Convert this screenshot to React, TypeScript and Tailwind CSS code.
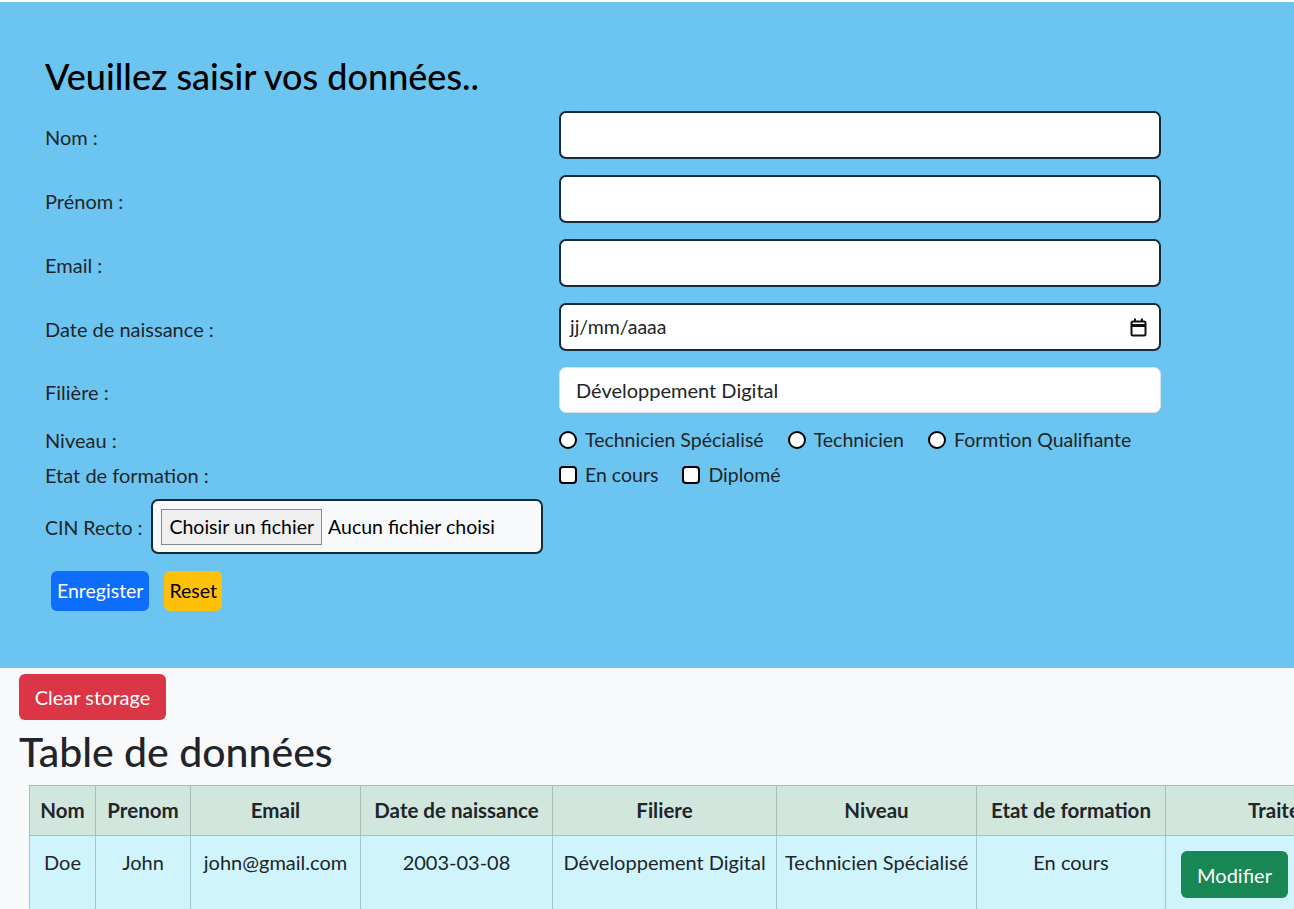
import React from "react"

const labelCls = "text-[20px] text-[#212529]"
const inputCls = "h-[48px] w-[602px] rounded-[7px] border-2 border-[#162b3a] bg-white"

function Row({ label, children, h = "h-[48px]", mt = "mt-4", pt = "pt-[4px]" }: { label: string; children: React.ReactNode; h?: string; mt?: string; pt?: string }) {
  return (
    <div className={`flex items-center ${h} ${mt}`}>
      <div className={`w-[514px] ${pt} ${labelCls}`}>{label}</div>
      {children}
    </div>
  )
}

function Radio({ label }: { label: string }) {
  return (
    <label className="flex items-center gap-[8px] text-[19.5px] text-[#212529]">
      <span className="h-[18px] w-[18px] rounded-full border-2 border-black bg-white" />
      {label}
    </label>
  )
}

function Check({ label }: { label: string }) {
  return (
    <label className="flex items-center gap-[8px] text-[19.5px] text-[#212529]">
      <span className="h-[18px] w-[18px] rounded-[4px] border-2 border-black bg-white" />
      {label}
    </label>
  )
}

const cols = [
  { h: "Nom", v: "Doe", w: "w-[66px]" },
  { h: "Prenom", v: "John", w: "w-[95px]" },
  { h: "Email", v: "john@gmail.com", w: "w-[170px]" },
  { h: "Date de naissance", v: "2003-03-08", w: "w-[192px]" },
  { h: "Filiere", v: "Développement Digital", w: "w-[224px]" },
  { h: "Niveau", v: "Technicien Spécialisé", w: "w-[200px]" },
  { h: "Etat de formation", v: "En cours", w: "w-[189px]" },
]

export default function App() {
  return (
    <div className="min-h-screen w-full overflow-hidden bg-[#f8f9fa] font-['Lato',sans-serif]">
      <div className="h-[2px] bg-white" />
      <section className="h-[666px] bg-[#6cc5f1] pl-[45px] pt-[50px]">
        <h3 className="text-[36px] font-medium leading-[48px] text-black">Veuillez saisir vos données..</h3>
        <div className="mt-[11px]">
          <Row label="Nom :" mt="mt-0">
            <div className={inputCls} />
          </Row>
          <Row label="Prénom :">
            <div className={inputCls} />
          </Row>
          <Row label="Email :">
            <div className={inputCls} />
          </Row>
          <Row label="Date de naissance :">
            <div className={`${inputCls} flex items-center justify-between pl-[9px] pr-[12px]`}>
              <span className="text-[19.5px] text-[#212529]">jj/mm/aaaa</span>
              <svg width="17" height="19" viewBox="0 0 17 19" fill="none" stroke="#111" strokeWidth="2">
                <rect x="1.5" y="3.5" width="14" height="14" rx="1.5" />
                <line x1="1.5" y1="7.5" x2="15.5" y2="7.5" strokeWidth="3" />
                <line x1="5" y1="0.5" x2="5" y2="4" />
                <line x1="12" y1="0.5" x2="12" y2="4" />
              </svg>
            </div>
          </Row>
          <Row label="Filière :" h="h-[46px]">
            <div className="flex h-[46px] w-[602px] items-center rounded-[7px] border border-[#dee2e6] bg-white pl-[16px] text-[20px] text-[#212529]">
              Développement Digital
            </div>
          </Row>
          <Row label="Niveau :" h="h-[24px]" mt="mt-[15px]" pt="pt-0">
            <div className="flex items-center gap-[24px]">
              <Radio label="Technicien Spécialisé" />
              <Radio label="Technicien" />
              <Radio label="Formtion Qualifiante" />
            </div>
          </Row>
          <Row label="Etat de formation :" h="h-[24px]" mt="mt-[11px]" pt="pt-0">
            <div className="flex items-center gap-[24px]">
              <Check label="En cours" />
              <Check label="Diplomé" />
            </div>
          </Row>
          <div className="mt-[12px] flex h-[55px] items-center gap-[9px]">
            <span className="pt-[2px] text-[19.5px] text-[#212529]">CIN Recto :</span>
            <div className="flex h-[55px] w-[392px] items-center gap-[6px] rounded-[7px] border-2 border-[#162b3a] bg-[#f8f9fa] pl-[8px]">
              <span className="flex h-[36px] items-center border border-[#8a8a8a] bg-[#efefef] px-[7px] text-[19.5px] text-black">Choisir un fichier</span>
              <span className="text-[19.5px] text-black">Aucun fichier choisi</span>
            </div>
          </div>
          <div className="mt-[17px] flex gap-[15px] pl-[6px]">
            <button className="h-[40px] rounded-[6px] bg-[#0d6efd] px-[6px] text-[19.5px] text-white">Enregister</button>
            <button className="h-[40px] rounded-[6px] bg-[#ffc107] px-[5px] text-[19.5px] text-black">Reset</button>
          </div>
        </div>
      </section>
      <div className="pl-[19px] pt-[6px]">
        <button className="h-[46px] w-[147px] rounded-[6px] bg-[#dc3545] text-[20px] text-white">Clear storage</button>
        <h2 className="mt-[6px] text-[41px] font-medium leading-[52px] text-[#212529]">Table de données</h2>
        <table className="ml-[10px] mt-[7px] w-[1400px] table-fixed border-collapse text-[20px] text-[#212529]">
          <thead>
            <tr className="bg-[#d1e7dd]">
              {cols.map((c) => (
                <th key={c.h} className={`${c.w} h-[50px] whitespace-nowrap border border-[#a9bdb5] px-[10px] text-center text-[20.5px] font-bold`}>
                  {c.h}
                </th>
              ))}
              <th className="h-[50px] w-[264px] whitespace-nowrap border border-[#a9bdb5] px-[10px] text-center text-[20.5px] font-bold">Traitement</th>
            </tr>
          </thead>
          <tbody>
            <tr className="bg-[#cff4fc]">
              {cols.map((c) => (
                <td key={c.h} className="h-[80px] whitespace-nowrap border border-[#a9c4cb] px-[8px] pt-[11px] text-center align-top">
                  {c.v}
                </td>
              ))}
              <td className="h-[80px] whitespace-nowrap border border-[#a9c4cb] pl-[15px] pt-[15px] align-top">
                <div className="flex gap-[10px]">
                  <button className="h-[47px] w-[107px] rounded-[6px] bg-[#198754] text-[20px] text-white">Modifier</button>
                  <button className="h-[47px] w-[115px] rounded-[6px] bg-[#dc3545] text-[20px] text-white">Supprimer</button>
                </div>
              </td>
            </tr>
          </tbody>
        </table>
      </div>
    </div>
  )
}
